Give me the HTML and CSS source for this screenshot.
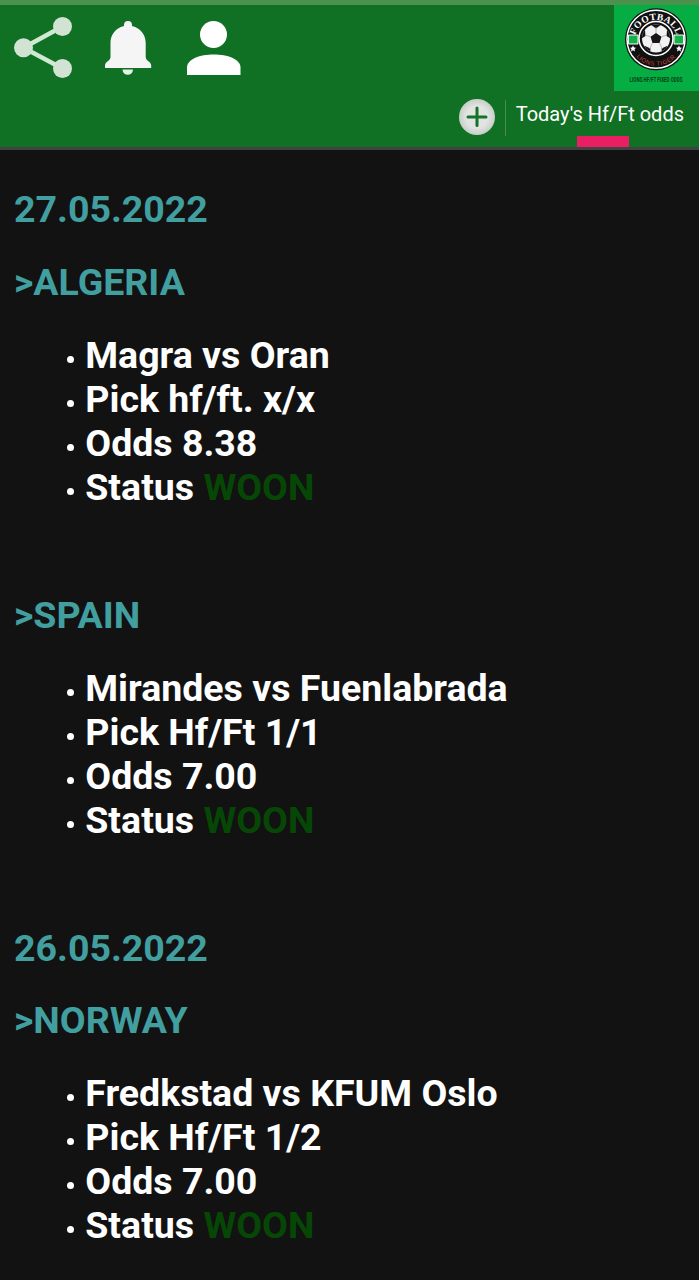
FILE: index.html
```
<!DOCTYPE html>
<html lang="en">
    <head>
        <meta charset="UTF-8">
        <title>Today's Hf/Ft odds</title>
        <link rel="stylesheet" href="styles.css">
    </head>

    <body class="app">
        <div class="status-bar"></div>

        <header class="header">
            <div class="header__top">
                <nav class="header__icons">
                    <svg class="header__icon" width="250" height="86" viewBox="0 5 250 86">
                        <!-- share -->
                        <path d="M62.5 26.500 L23.500 47.800 L62.500 68.500" fill="none" stroke="#d0ead2" stroke-width="4.500"/>
                        <g fill="#d2e3d3">
                            <circle cx="62.500" cy="26.500" r="9.500"/>
                            <circle cx="23.500" cy="47.800" r="9.500"/>
                            <circle cx="62.500" cy="68.500" r="9.500"/>
                        </g>
                        <!-- bell -->
                        <path d="M124 26 V25 A4 4 0 0 1 132 25 V26 C141 28.500 145.700 35 145.700 43 V57 C145.700 61 151.200 61.500 151.200 65.500 V68 H105 V65.500 C105 61.500 110.500 61 110.500 57 V43 C110.500 35 115 28.500 124 26 Z" fill="#f5f5f5"/>
                        <path d="M122.500 69.500 H133 A5.200 5.200 0 0 1 122.500 69.500 Z" fill="#e3f3e4"/>
                        <!-- user -->
                        <circle cx="213.500" cy="34.500" r="13.500" fill="#fff"/>
                        <path d="M187 75 V67.500 C187 59 200 54.500 213.700 54.500 S240.500 59 240.500 67.500 V75 Z" fill="#fff"/>
                    </svg>
                </nav>

                <svg class="header__logo" width="85" height="86" viewBox="614 5 85 86">
                    <defs>
                        <path id="arc-top" d="M635.400 48 A21.600 21.600 0 1 1 676.600 48"/>
                        <path id="arc-bottom" d="M629.800 39.500 A26.200 26.200 0 0 0 682.200 39.500"/>
                        <clipPath id="ball"><circle cx="656" cy="38.500" r="14"/></clipPath>
                    </defs>
                    <circle cx="656" cy="39.300" r="31" fill="#111"/>
                    <circle cx="656" cy="39.300" r="29" fill="#111" stroke="#fff" stroke-width="1.500"/>
                    <path d="M628.500 35 H638 V44 H628.500 Z M674 35 H683.500 V44 H674 Z" fill="#10b44a" stroke="#fff"/>
                    <circle cx="656" cy="38.500" r="17" fill="#111" stroke="#fff" stroke-width="1.500"/>
                    <circle cx="656" cy="38.500" r="14" fill="#f2f2f2"/>
                    <g clip-path="url(#ball)">
                        <path d="M656 33 L661.500 36.800 L659.500 43 H652.500 L650.500 36.800 Z M650 24 H662 L656 28.500 Z M671 30 V39 L666.500 36 L667 30 Z M641 30 V39 L645.500 36 L645 30 Z M662 54 L661.500 48.500 L667 46 L670 48 Z M650 54 L650.500 48.500 L645 46 L642 48 Z" fill="#161616"/>
                        <path d="M656 33 V27 M661.500 36.800 L667 35 M659.500 43 L662.500 49 M652.500 43 L649.500 49 M650.500 36.800 L645 35" stroke="#999" stroke-width=".7"/>
                    </g>
                    <path d="M633 45.500 L634 47.500 L636 47.700 L634.500 49.200 L635 51.500 L633 50.300 L631 51.500 L631.500 49.200 L630 47.700 L632 47.500 Z M679 45.500 L680 47.500 L682 47.700 L680.500 49.200 L681 51.500 L679 50.300 L677 51.500 L677.500 49.200 L676 47.700 L678 47.500 Z" fill="#fff"/>
                    <text class="logo__name"><textPath href="#arc-top" startOffset="50%">FOOTBALL</textPath></text>
                    <text class="logo__team"><textPath href="#arc-bottom" startOffset="50%">LIONS TIGER</textPath></text>
                    <text class="logo__caption" transform="translate(656 81.500) scale(.67 1)">LIONS HF/FT FIXED ODDS</text>
                </svg>
            </div>

            <div class="header__tabs">
                <svg class="header__add" width="36" height="36" viewBox="0 0 36 36">
                    <defs>
                        <radialGradient id="button">
                            <stop offset=".6" stop-color="#e2e4e2"/>
                            <stop offset="1" stop-color="#c6cec6"/>
                        </radialGradient>
                    </defs>
                    <circle cx="18" cy="18" r="18" fill="url(#button)"/>
                    <path d="M18 9 V26.500 M9 18 H27" stroke="#137326" stroke-width="3" stroke-linecap="round"/>
                </svg>
                <div class="header__tab">
                    <span class="header__tab__label">Today's Hf/Ft odds</span>
                    <span class="header__tab__indicator"></span>
                </div>
            </div>
        </header>

        <main class="tips">
            <h1 class="tips__title">27.05.2022</h1>
            <h2 class="tips__title">&gt;ALGERIA</h2>
            <ul class="tips__list">
                <li class="tips__entry">Magra vs Oran</li>
                <li class="tips__entry">Pick hf/ft. x/x</li>
                <li class="tips__entry">Odds 8.38</li>
                <li class="tips__entry">Status <span class="tips__won">WOON</span></li>
            </ul>

            <h2 class="tips__title">&gt;SPAIN</h2>
            <ul class="tips__list">
                <li class="tips__entry">Mirandes vs Fuenlabrada</li>
                <li class="tips__entry">Pick Hf/Ft 1/1</li>
                <li class="tips__entry">Odds 7.00</li>
                <li class="tips__entry">Status <span class="tips__won">WOON</span></li>
            </ul>

            <h1 class="tips__title">26.05.2022</h1>
            <h2 class="tips__title">&gt;NORWAY</h2>
            <ul class="tips__list">
                <li class="tips__entry">Fredkstad vs KFUM Oslo</li>
                <li class="tips__entry">Pick Hf/Ft 1/2</li>
                <li class="tips__entry">Odds 7.00</li>
                <li class="tips__entry">Status <span class="tips__won">WOON</span></li>
            </ul>
        </main>
    </body>
</html>
```

FILE: styles.css
```
:root {
    --color-header: #107024;
    --color-background: #121212;
    --color-title: #429fa0;
    --color-accent: #e91e63;
    --color-won: #064706;
}

html,
body {
    height: 100%;
    margin: 0;
}

.app {
    background-color: var(--color-background);
    color: #fff;
    font-family: Roboto, sans-serif;
    overflow: hidden;
}

.status-bar {
    background-color: #4b924f;
    height: 5px;
}

.header {
    background-color: var(--color-header);
    border-bottom: 3px solid #424242;
    box-sizing: border-box;
    height: 145px;
}

.header__top {
    display: flex;
    height: 86px;
    justify-content: space-between;
}

.header__icon,
.header__logo {
    display: block;
}

.header__logo {
    background-color: #06ad42;
}

.logo__name {
    fill: #fff;
    font-family: "Liberation Serif", serif;
    font-size: 9.5px;
    font-weight: bold;
    letter-spacing: 0.3px;
    text-anchor: middle;
}

.logo__team {
    fill: #c8463f;
    font-family: "Liberation Sans", sans-serif;
    font-size: 6px;
    letter-spacing: 0.6px;
    text-anchor: middle;
}

.logo__caption {
    fill: #063e1a;
    font-size: 6.8px;
    font-weight: bold;
    text-anchor: middle;
}

.header__tabs {
    display: flex;
    height: 56px;
    justify-content: flex-end;
}

.header__add {
    margin: 8px 10px 0 0;
}

.header__tab {
    display: flex;
    flex-direction: column;
    justify-content: space-between;
    padding-right: 15px;
}

.header__tab__label {
    border-left: 1px solid #4f8757;
    font-size: 20px;
    line-height: 29px;
    margin-top: 9px;
    padding: 0 0 7px 10px;
}

.header__tab__indicator {
    background-color: var(--color-accent);
    height: 11px;
    margin-left: 72px;
    width: 52px;
}

.tips {
    font-size: 37.5px;
    font-weight: bold;
    line-height: 44px;
    padding: 37px 14px 0;
}

.tips__title {
    color: var(--color-title);
    font-size: inherit;
    margin: 0 0 28.85px;
}

.tips__list {
    list-style: none;
    margin: 0 0 84px;
    padding: 0 0 0 52.6px;
}

.tips__entry::before {
    background-color: #fff;
    border-radius: 50%;
    content: "";
    display: inline-block;
    height: 7px;
    margin-right: 11.7px;
    vertical-align: 5px;
    width: 7px;
}

.tips__won {
    color: var(--color-won);
}
```
